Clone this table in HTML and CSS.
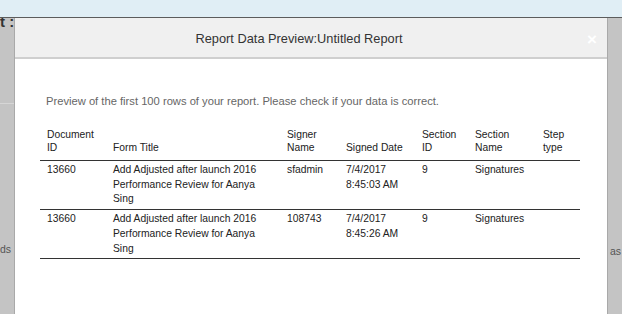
FILE: index.html
```html
<!DOCTYPE html>
<html>
<head>
<meta charset="utf-8">
<link rel="stylesheet" href="styles.css">
</head>
<body>
<div class="topbar"></div>
<div class="stage">
  <div class="gutter gutter-left">
    <div class="page-heading">t :</div>
    <div class="page-rule"></div>
    <div class="page-text">ds</div>
  </div>
  <div class="modal">
    <div class="modal-header">
      <div class="modal-title">Report Data Preview:Untitled Report</div>
      <button class="close" type="button">&times;</button>
    </div>
    <div class="modal-body">
      <p class="intro">Preview of the first 100 rows of your report. Please check if your data is correct.</p>
      <table class="preview">
        <colgroup>
          <col class="c1"><col class="c2"><col class="c3"><col class="c4"><col class="c5"><col class="c6"><col class="c7">
        </colgroup>
        <thead>
          <tr>
            <th>Document ID</th>
            <th>Form Title</th>
            <th>Signer Name</th>
            <th>Signed Date</th>
            <th>Section ID</th>
            <th>Section Name</th>
            <th>Step type</th>
          </tr>
        </thead>
        <tbody>
          <tr>
            <td>13660</td>
            <td>Add Adjusted after launch 2016 Performance Review for Aanya Sing</td>
            <td>sfadmin</td>
            <td>7/4/2017 8:45:03 AM</td>
            <td>9</td>
            <td>Signatures</td>
            <td></td>
          </tr>
          <tr>
            <td>13660</td>
            <td>Add Adjusted after launch 2016 Performance Review for Aanya Sing</td>
            <td>108743</td>
            <td>7/4/2017 8:45:26 AM</td>
            <td>9</td>
            <td>Signatures</td>
            <td></td>
          </tr>
        </tbody>
      </table>
    </div>
  </div>
  <div class="gutter gutter-right">
    <div class="page-text page-text-right">as</div>
  </div>
</div>
</body>
</html>
```

FILE: styles.css
```css
html, body {
  margin: 0;
  padding: 0;
  height: 100%;
  overflow: hidden;
}

body {
  font-family: "Liberation Sans", Arial, sans-serif;
  background: #c4c4c4;
  color: #333;
}

.topbar {
  height: 17px;
  background: #e0eef5;
  border-bottom: 1px solid #5c5c5c;
}

.stage {
  display: flex;
  height: 296px;
}

.gutter {
  width: 15px;
  flex: none;
  display: flex;
  flex-direction: column;
  overflow: hidden;
  background: #c4c4c4;
}

.gutter-left {
  width: 15px;
  border-right: 1px solid #a9a9a9;
  box-sizing: border-box;
}

.gutter-right {
  width: 15px;
  border-left: 1px solid #a9a9a9;
  box-sizing: border-box;
}

.page-heading {
  font-family: "Liberation Sans", Arial, sans-serif;
  font-weight: bold;
  font-size: 15px;
  line-height: 15px;
  margin-top: -4px;
  color: #333;
  white-space: nowrap;
}

.page-rule {
  margin-top: 74px;
  height: 1px;
  background: #d6d6d6;
}

.page-text {
  margin-top: 138px;
  font-size: 10.5px;
  line-height: 14px;
  color: #555;
  white-space: nowrap;
}

.page-text-right {
  margin-top: 226px;
  padding-left: 2px;
}

.modal {
  width: 592px;
  flex: none;
  background: #fff;
  position: relative;
  box-sizing: border-box;
}

.modal-header {
  height: 39px;
  background: #f0f0f0;
  border-bottom: 2px solid #cfcfcf;
  display: flex;
  align-items: center;
  justify-content: center;
  padding-right: 24px;
  position: relative;
}

.modal-title {
  font-size: 12.8px;
  color: #333;
  margin-top: 2px;
}

.close {
  position: absolute;
  right: 10px;
  top: 13px;
  border: 0;
  background: transparent;
  padding: 0;
  color: #fff;
  font-family: "Liberation Sans", Arial, sans-serif;
  font-size: 17px;
  line-height: 17px;
  font-weight: bold;
}

.modal-body {
  padding: 35px 26px 0 25px;
  font-size: 10.3px;
}

.intro {
  margin: 0 0 17px 6px;
  color: #666;
  font-size: 11.2px;
  line-height: 15px;
}

.preview {
  width: 540px;
  border-collapse: collapse;
  table-layout: fixed;
  color: #222;
}

.c1 { width: 66px; }
.c2 { width: 174px; }
.c3 { width: 59px; }
.c4 { width: 76px; }
.c5 { width: 53px; }
.c6 { width: 68px; }
.c7 { width: 44px; }

.preview th {
  font-weight: normal;
  text-align: left;
  vertical-align: bottom;
  line-height: 13px;
  padding: 2px 7px 6px;
  border-bottom: 1px solid #333;
}

.preview td {
  vertical-align: top;
  line-height: 14.7px;
  padding: 2px 7px;
  border-bottom: 1px solid #333;
}
```
